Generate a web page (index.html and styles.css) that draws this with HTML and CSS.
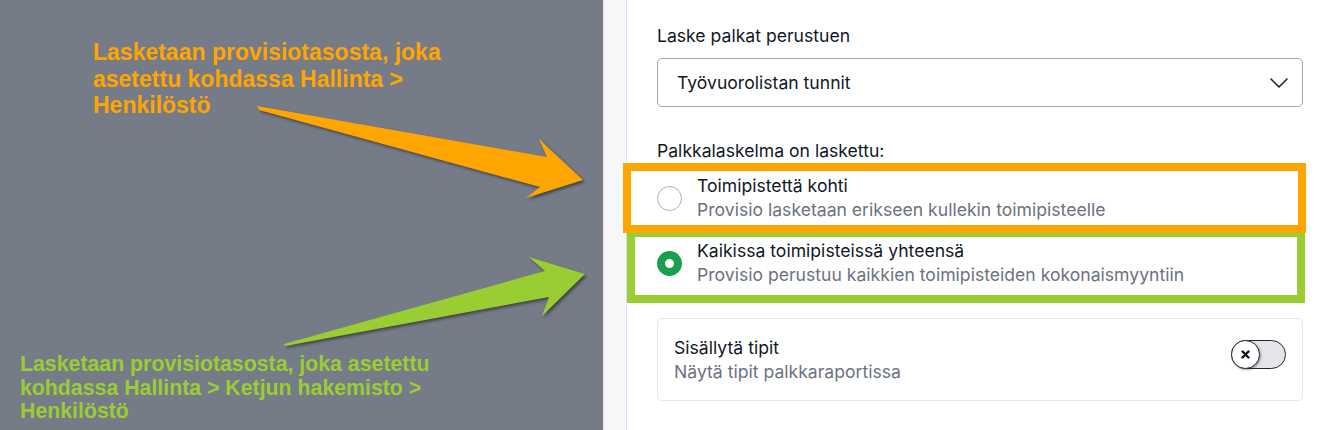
FILE: index.html
```html
<!DOCTYPE html>
<html lang="fi">
<head>
<meta charset="utf-8">
<title>Palkkalaskelma</title>
<link rel="stylesheet" href="styles.css">
</head>
<body>
<div class="page">
  <aside class="notes">
    <svg class="arrows" width="603" height="430" viewBox="0 0 603 430" aria-hidden="true">
      <polygon class="arrow-orange" points="257,106 547,157 539,139 583,180 526,198 540,187 259,110"/>
      <polygon class="arrow-green" points="284,344 545,271 529,257 585,274 542,316 549,297 285,346"/>
    </svg>
    <p class="note note-orange">Lasketaan provisiotasosta, joka<br>asetettu kohdassa Hallinta &gt;<br>Henkilöstö</p>
    <p class="note note-green">Lasketaan provisiotasosta, joka asetettu<br>kohdassa Hallinta &gt; Ketjun hakemisto &gt;<br>Henkilöstö</p>
  </aside>
  <div class="rail"></div>
  <main class="content">
    <label class="field-label">Laske palkat perustuen</label>
    <div class="select">
      <span>Työvuorolistan tunnit</span>
      <svg class="chevron" width="18" height="10" viewBox="0 0 18 10"><path d="M1 1 L9 9 L17 1"/></svg>
    </div>

    <div class="group-label">Palkkalaskelma on laskettu:</div>
    <div class="options">
      <div class="option">
        <span class="radio"></span>
        <div class="option-text">
          <div class="title">Toimipistettä kohti</div>
          <div class="desc">Provisio lasketaan erikseen kullekin toimipisteelle</div>
        </div>
      </div>
      <div class="option">
        <span class="radio checked"></span>
        <div class="option-text">
          <div class="title">Kaikissa toimipisteissä yhteensä</div>
          <div class="desc">Provisio perustuu kaikkien toimipisteiden kokonaismyyntiin</div>
        </div>
      </div>
    </div>

    <div class="card">
      <div class="card-text">
        <div class="title">Sisällytä tipit</div>
        <div class="desc">Näytä tipit palkkaraportissa</div>
      </div>
      <div class="toggle">
        <span class="knob">
          <svg width="9" height="9" viewBox="0 0 9 9"><path d="M1.5 1.5 L7.5 7.5 M7.5 1.5 L1.5 7.5"/></svg>
        </span>
      </div>
    </div>
  </main>
  <div class="mark mark-green"></div>
  <div class="mark mark-orange"></div>
</div>
</body>
</html>
```

FILE: styles.css
```css
* { box-sizing: border-box; }
html, body { margin: 0; padding: 0; }
body {
  background: #ffffff;
  font-family: Inter, "Noto Sans", sans-serif;
  color: #111827;
}
.page {
  position: relative;
  display: flex;
  width: 1332px;
  height: 430px;
  overflow: hidden;
}
.notes {
  position: relative;
  flex: 0 0 603px;
  height: 430px;
  background: #767c87;
}
.arrows {
  position: absolute;
  left: 0;
  top: 0;
}
.arrow-orange {
  fill: #ffa500;
  filter: drop-shadow(2px 2px 1.5px rgba(0,0,0,0.45));
}
.arrow-green {
  fill: #9acd32;
  filter: drop-shadow(2px 2px 1.5px rgba(0,0,0,0.45));
}
.note {
  position: absolute;
  margin: 0;
  font-family: "Liberation Sans", Arial, sans-serif;
  font-weight: bold;
  white-space: nowrap;
}
.note-orange {
  left: 93px;
  top: 39px;
  font-size: 23px;
  line-height: 26.5px;
  color: #ffa500;
}
.note-green {
  left: 20px;
  top: 353px;
  font-size: 21.3px;
  line-height: 23.7px;
  color: #9acd32;
}
.rail {
  flex: 0 0 24px;
  background: #f7f8fa;
  border-left: 2px solid #eceef2;
  border-right: 1px solid #d4e2fb;
}
.content {
  flex: 1;
  padding: 24px 29px 0 30px;
  display: flex;
  flex-direction: column;
  font-size: 17.6px;
}
.field-label, .group-label {
  display: block;
  font-size: 17.6px;
  line-height: 24px;
  color: #111827;
}
.select {
  margin-top: 10px;
  height: 49px;
  border: 1px solid #a3a7b0;
  border-radius: 5px;
  display: flex;
  align-items: center;
  justify-content: space-between;
  padding: 0 14px 0 19px;
  font-size: 17.6px;
  line-height: 24px;
  color: #111827;
}
.chevron path {
  fill: none;
  stroke: #1f2328;
  stroke-width: 1.6;
  stroke-linecap: round;
  stroke-linejoin: round;
}
.group-label { margin-top: 32px; }
.options {
  margin-top: 3px;
  display: flex;
  flex-direction: column;
}
.option {
  display: flex;
  align-items: center;
  gap: 15px;
  padding: 8px 0 9px;
}
.radio {
  flex: 0 0 25px;
  width: 25px;
  height: 25px;
  border-radius: 50%;
  border: 1.5px solid #adb1b9;
  background: #ffffff;
}
.radio.checked {
  border: 8.5px solid #1a9f4f;
  background: #ffffff;
}
.title {
  font-size: 17.6px;
  line-height: 24px;
  color: #111827;
}
.desc {
  font-size: 17.6px;
  line-height: 24px;
  color: #6b7280;
}
.card {
  margin-top: 22px;
  border: 1px solid #e4e6ea;
  border-radius: 5px;
  padding: 17px 16px 16px 16px;
  display: flex;
  justify-content: space-between;
  align-items: flex-start;
}
.toggle {
  position: relative;
  margin-top: 4px;
  width: 55px;
  height: 29px;
  border: 1.5px solid #26282c;
  border-radius: 15px;
  background: #e4e5ea;
}
.knob {
  position: absolute;
  left: -1.5px;
  top: -1.5px;
  width: 29px;
  height: 29px;
  border-radius: 50%;
  border: 1.5px solid #26282c;
  background: #ffffff;
  box-shadow: 1px 1px 2px rgba(0,0,0,0.35);
  display: flex;
  align-items: center;
  justify-content: center;
}
.knob path {
  stroke: #111111;
  stroke-width: 2.4;
  stroke-linecap: round;
}
.mark {
  position: absolute;
  border-style: solid;
  border-width: 8px;
}
.mark-orange {
  left: 623px;
  top: 163px;
  width: 683px;
  height: 70px;
  border-color: #ffa500;
}
.mark-green {
  left: 627px;
  top: 229px;
  width: 678px;
  height: 74px;
  border-color: #9acd32;
}
```
